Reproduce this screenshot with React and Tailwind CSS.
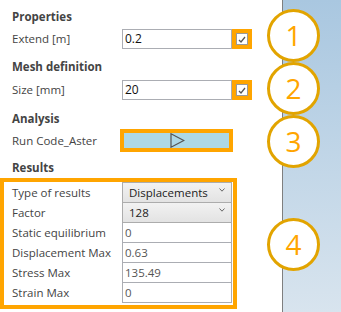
import React from "react";

function Check() {
  return (
    <div className="w-[20px] h-[20px] bg-[#ffa500] flex items-center justify-center shrink-0">
      <div className="w-[12px] h-[12px] bg-white border border-[#9a9a9a] flex items-center justify-center">
        <svg width="8" height="7" viewBox="0 0 8 7">
          <path d="M1 4 L3 6 L7 1" fill="none" stroke="#555" strokeWidth="1.3" />
        </svg>
      </div>
    </div>
  );
}

function Chevron() {
  return (
    <svg width="6" height="4" viewBox="0 0 6 4" className="absolute right-[6px] top-[5px]">
      <path d="M0.5 0.5 L3 3.2 L5.5 0.5" fill="none" stroke="#666" strokeWidth="1" />
    </svg>
  );
}

function Circle({ n, top }) {
  return (
    <div
      className="absolute left-[267px] w-[53px] h-[53px] rounded-full border-[3px] border-[#e2a400] bg-white flex items-center justify-center text-[28px] leading-none text-[#ffa500]"
      style={{ top }}
    >
      <span className="mt-[-2px]">{n}</span>
    </div>
  );
}

export default function App() {
  const rows = [
    { label: "Type of results", value: "Displacements", dd: true },
    { label: "Factor", value: "128", dd: true },
    { label: "Static equilibrium", value: "0" },
    { label: "Displacement Max", value: "0.63" },
    { label: "Stress Max", value: "135.49" },
    { label: "Strain Max", value: "0" },
  ];
  return (
    <div className="w-[341px] h-[312px] flex relative bg-white overflow-hidden font-['Open_Sans',sans-serif] text-[11.5px] text-[#444]">
      <div className="w-[282px] shrink-0 flex flex-col">
        <div className="h-[20px] mt-[7px] pl-3 flex items-center font-bold text-[11.5px]">Properties</div>
        <div className="h-[20px] mt-[2px] flex items-center">
          <div className="w-[122px] pl-3">Extend [m]</div>
          <div className="w-[110px] h-[20px] border border-[#abadb3] px-[2px] flex items-center text-[#111] text-[12px]">0.2</div>
          <Check />
        </div>
        <div className="h-[20px] mt-[8px] pl-3 flex items-center font-bold text-[11.5px]">Mesh definition</div>
        <div className="h-[20px] mt-[3px] flex items-center">
          <div className="w-[122px] pl-3">Size [mm]</div>
          <div className="w-[110px] h-[20px] border border-[#abadb3] px-[2px] flex items-center text-[#111] text-[12px]">20</div>
          <Check />
        </div>
        <div className="h-[20px] mt-[9px] pl-3 flex items-center font-bold text-[11.5px]">Analysis</div>
        <div className="h-[23px] flex items-center">
          <div className="w-[120px] pl-3">Run Code_Aster</div>
          <div className="w-[113px] h-[23px] border-4 border-[#ffa500] bg-[#add8e6] flex items-center justify-center">
            <svg width="15" height="15" viewBox="0 0 15 15" className="ml-[2px]">
              <path d="M1 0.8 L1 14.2 L13.8 7.5 Z" fill="none" stroke="#555" strokeWidth="1.2" strokeLinejoin="miter" />
            </svg>
          </div>
        </div>
        <div className="h-[20px] mt-[6px] pl-3 flex items-center font-bold text-[11.5px]">Results</div>
        <div className="w-[237px] h-[131px] border-4 border-[#ffa500] pl-2 flex flex-col">
          {rows.map((r, i) => (
            <div key={r.label} className={"flex items-center h-[21px] " + (i > 0 ? "mt-[-1px]" : "")}>
              <div className="w-[110px] whitespace-nowrap">{r.label}</div>
              {r.dd ? (
                <div className="relative w-[110px] h-[21px] border border-[#acacac] bg-gradient-to-b from-[#f2f2f2] to-[#e3e3e3] pl-[6px] flex items-center text-[#222]">
                  {r.value}
                  <Chevron />
                </div>
              ) : (
                <div className="w-[110px] h-[21px] border border-[#abadb3] bg-white px-[2px] flex items-center text-[#555]">
                  {r.value}
                </div>
              )}
            </div>
          ))}
        </div>
      </div>
      <div className="w-px bg-[#7f7f7f]" />
      <div className="flex-1 bg-gradient-to-b from-[#a9c7e0] to-[#d8e4ee]" />
      <Circle n="1" top={9} />
      <Circle n="2" top={62} />
      <Circle n="3" top={115} />
      <Circle n="4" top={218} />
    </div>
  );
}
